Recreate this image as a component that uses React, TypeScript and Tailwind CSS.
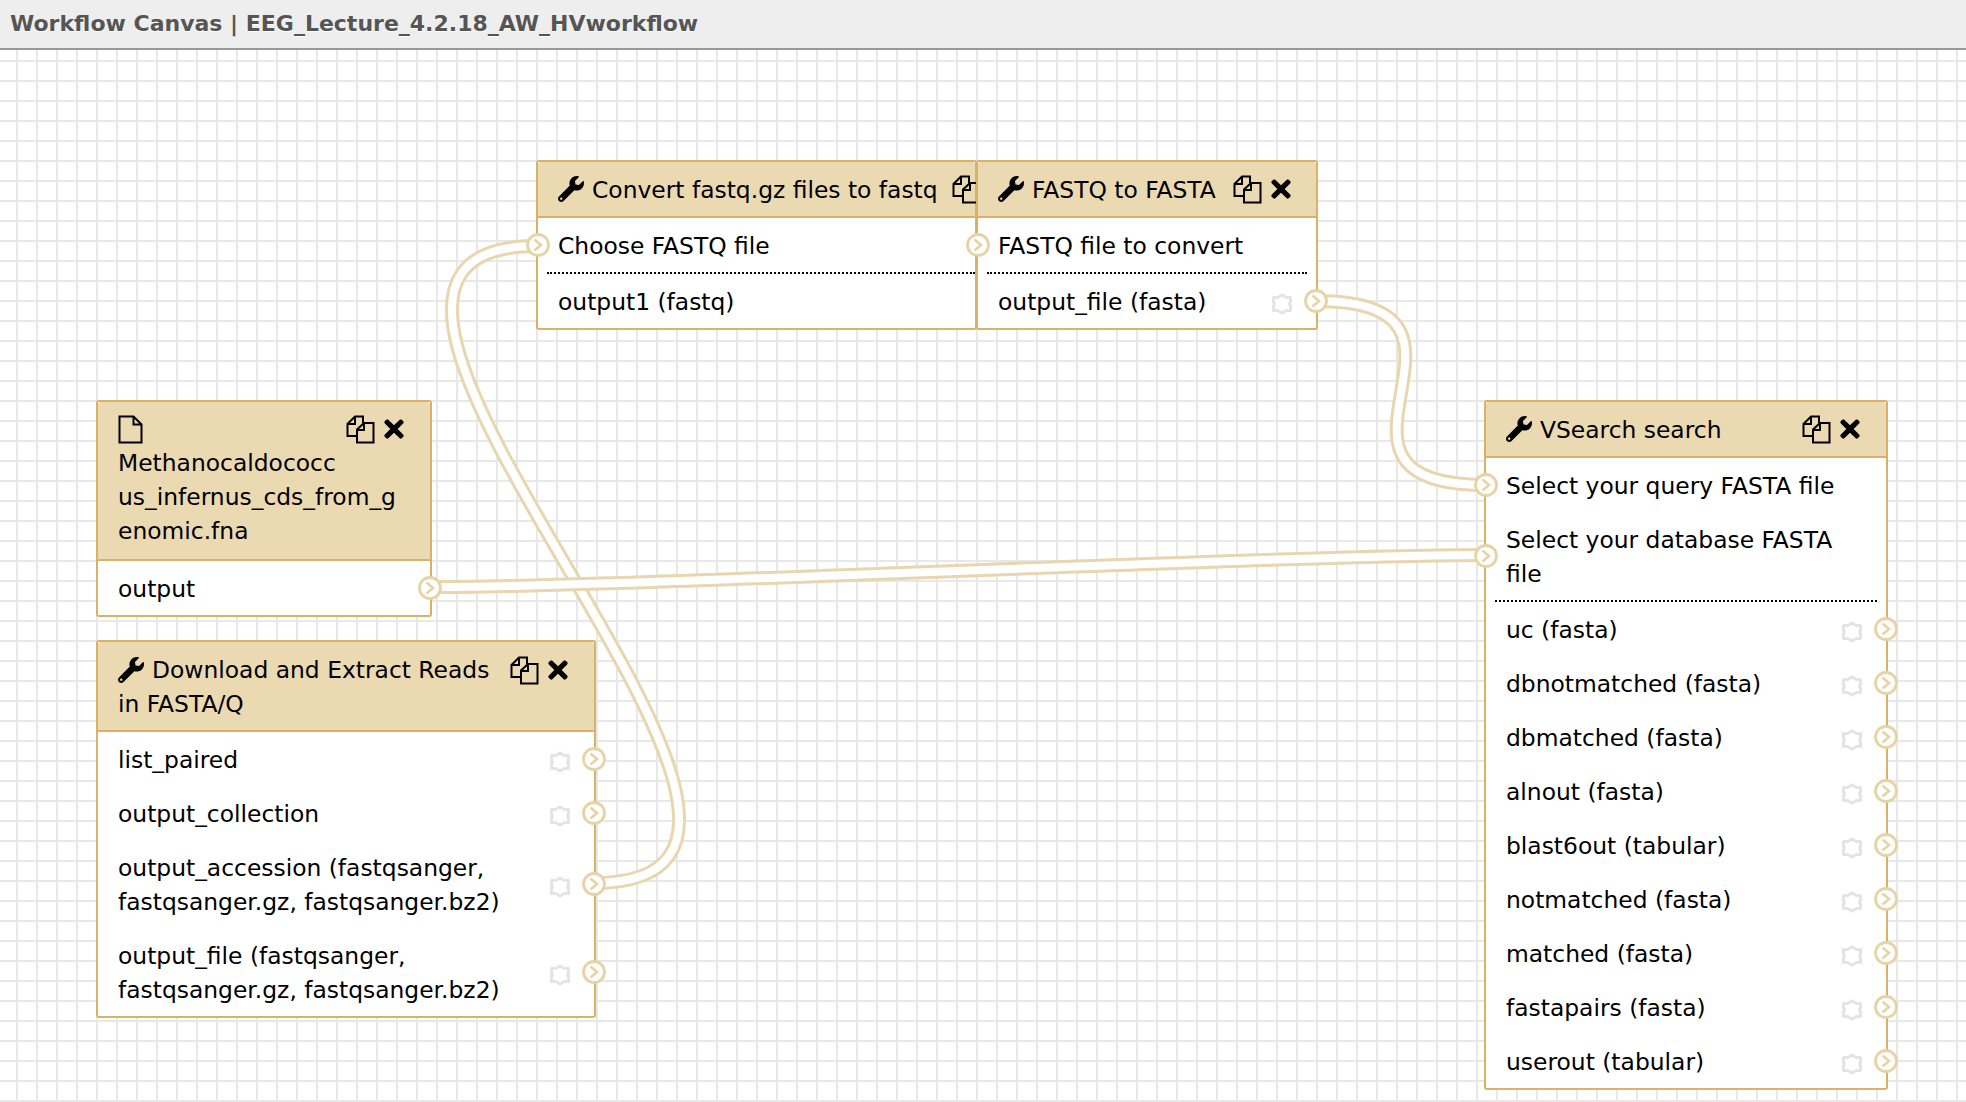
import React from 'react';
import { FaTimes, FaWrench } from 'react-icons/fa';

const Terminal = ({ side }: { side: 'left' | 'right' }) => (
  <svg
    width="26"
    height="26"
    viewBox="0 0 26 26"
    className={`absolute top-1/2 z-20 -translate-y-1/2 ${side === 'left' ? '-left-[13px]' : '-right-[13px]'}`}
  >
    <circle cx="13" cy="13" r="10.5" fill="#ffffff" stroke="#e6d3a6" strokeWidth="2.8" />
    <path d="M9.5 7.5 L16 13 L9.5 18.5" fill="none" stroke="#e6d3a6" strokeWidth="2.6" />
  </svg>
);

const OutputStar = () => (
  <svg
    width="22"
    height="22"
    viewBox="0 0 22 22"
    className="absolute right-[23px] top-1/2 -translate-y-[8px] blur-[0.4px]"
  >
    <path
      d="M11 2 L15.5 4.5 H19.5 V9 L18.5 11 L19.5 13 V17.5 H15.5 L11 20 L6.5 17.5 H2.5 V13 L3.5 11 L2.5 9 V4.5 H6.5 Z"
      fill="none"
      stroke="#e4e4e4"
      strokeWidth="3"
      strokeLinejoin="round"
    />
  </svg>
);

const CopyIcon = () => (
  <svg width="29" height="29" viewBox="0 0 29 29" className="shrink-0" fill="none" stroke="#000" strokeWidth="2">
    <path d="M10 21 H1.5 V9 L9 1.5 H17 V8" />
    <path d="M9 2 V9 H2" />
    <path d="M11 27.5 V14.5 L18 8 H27.5 V27.5 Z" />
    <path d="M18 8.5 V15 H11.5" />
  </svg>
);

const FileIcon = () => (
  <svg width="25" height="29" viewBox="0 0 25 29" className="shrink-0" fill="none" stroke="#000" strokeWidth="2">
    <path d="M1.5 1.5 H15.5 L23.5 9.5 V27.5 H1.5 Z" />
    <path d="M15.5 2 V9.5 H23" />
  </svg>
);

const Actions = () => (
  <span className="flex shrink-0 items-center gap-[9px]">
    <CopyIcon />
    <FaTimes size={28} color="#000" className="-mx-[4px]" />
  </span>
);

const Row = ({
  lines,
  inTerm,
  outTerm,
  star,
}: {
  lines: string[];
  inTerm?: boolean;
  outTerm?: boolean;
  star?: boolean;
}) => (
  <div className="relative px-[20px] pb-[9px] pt-[11px]">
    {inTerm && <Terminal side="left" />}
    {star && <OutputStar />}
    {outTerm && <Terminal side="right" />}
    {lines.map((l) => (
      <div key={l} className="whitespace-nowrap">
        {l}
      </div>
    ))}
  </div>
);

const Dots = () => <div className="mx-[9px] border-t-2 border-dotted border-black" />;

const titleCls =
  'flex h-[56px] items-center border-b-2 border-[#d8b365] bg-[#ebd9b2] pl-[20px] rounded-t-[3px]';

const downloadOutputs: string[][] = [
  ['list_paired'],
  ['output_collection'],
  ['output_accession (fastqsanger,', 'fastqsanger.gz, fastqsanger.bz2)'],
  ['output_file (fastqsanger,', 'fastqsanger.gz, fastqsanger.bz2)'],
];

const vsearchOutputs = [
  'uc (fasta)',
  'dbnotmatched (fasta)',
  'dbmatched (fasta)',
  'alnout (fasta)',
  'blast6out (tabular)',
  'notmatched (fasta)',
  'matched (fasta)',
  'fastapairs (fasta)',
  'userout (tabular)',
];

// bezier ends are in canvas coordinates, header is 50px
const connectors = [
  'M594 833 C910 833 221 196 537 196',
  'M1317 251 C1517 251 1285 435 1485 435',
  'M430 537 C630 537 1285 505 1485 505',
];

export default function App() {
  return (
    <div className="flex h-screen flex-col overflow-hidden bg-white font-['DejaVu_Sans',sans-serif] text-[23.4px] leading-[34px] text-black">
      <div className="flex h-[50px] shrink-0 items-center border-b-2 border-[#999999] bg-[#eeeeee] pl-[10px] text-[22px] font-bold text-[#555555] [text-shadow:0_1px_1px_#ffffff]">
        Workflow Canvas | EEG_Lecture_4.2.18_AW_HVworkflow
      </div>

      <div className="relative flex-1 bg-[linear-gradient(#e8e8e8_2px,transparent_2px),linear-gradient(90deg,#e8e8e8_2px,transparent_2px)] bg-[size:20px_20px] bg-[position:16px_10px]">
        <svg width="1966" height="1052" className="absolute left-0 top-0" fill="none">
          {connectors.map((d) => (
            <g key={d}>
              <path d={d} stroke="#e8d6ae" strokeWidth="14" />
              <path d={d} stroke="#ffffff" strokeWidth="8" />
            </g>
          ))}
        </svg>

        {/* Convert fastq.gz */}
        <div className="absolute left-[536px] top-[110px] w-[441px] rounded-[3px] border-2 border-[#d8b365] bg-white">
          <div className={titleCls}>
            <FaWrench size={26} className="mr-[8px] shrink-0" />
            <span className="whitespace-nowrap pt-[2px]">Convert fastq.gz files to fastq</span>
            <span className="ml-[14px]">
              <Actions />
            </span>
          </div>
          <Row lines={['Choose FASTQ file']} inTerm />
          <div className="ml-[9px] border-t-2 border-dotted border-black" />
          <Row lines={['output1 (fastq)']} />
        </div>

        {/* FASTQ to FASTA */}
        <div className="absolute left-[976px] top-[110px] z-10 w-[342px] rounded-[3px] border-2 border-[#d8b365] bg-white">
          <div className={titleCls}>
            <FaWrench size={26} className="mr-[8px] shrink-0" />
            <span className="whitespace-nowrap pt-[2px]">FASTQ to FASTA</span>
            <span className="ml-auto pr-[25px]">
              <Actions />
            </span>
          </div>
          <Row lines={['FASTQ file to convert']} inTerm />
          <Dots />
          <Row lines={['output_file (fasta)']} star outTerm />
        </div>

        {/* Input dataset */}
        <div className="absolute left-[96px] top-[350px] w-[336px] rounded-[3px] border-2 border-[#d8b365] bg-white">
          <div className="rounded-t-[3px] border-b-2 border-[#d8b365] bg-[#ebd9b2] pb-[11px] pl-[20px] pr-[26px] pt-[10px]">
            <div className="flex h-[34px] items-center justify-between">
              <FileIcon />
              <Actions />
            </div>
            <div>Methanocaldococc</div>
            <div>us_infernus_cds_from_g</div>
            <div>enomic.fna</div>
          </div>
          <Row lines={['output']} outTerm />
        </div>

        {/* Download and Extract Reads */}
        <div className="absolute left-[96px] top-[590px] w-[500px] rounded-[3px] border-2 border-[#d8b365] bg-white">
          <div className="rounded-t-[3px] border-b-2 border-[#d8b365] bg-[#ebd9b2] pb-[9px] pl-[20px] pr-[26px] pt-[11px]">
            <div className="flex h-[34px] items-center">
              <FaWrench size={26} className="mr-[8px] shrink-0" />
              <span className="whitespace-nowrap">Download and Extract Reads</span>
              <span className="ml-auto">
                <Actions />
              </span>
            </div>
            <div>in FASTA/Q</div>
          </div>
          {downloadOutputs.map((lines) => (
            <Row key={lines[0]} lines={lines} star outTerm />
          ))}
        </div>

        {/* VSearch */}
        <div className="absolute left-[1484px] top-[350px] w-[404px] rounded-[3px] border-2 border-[#d8b365] bg-white">
          <div className={titleCls}>
            <FaWrench size={26} className="mr-[8px] shrink-0" />
            <span className="whitespace-nowrap pt-[2px]">VSearch search</span>
            <span className="ml-auto pr-[26px]">
              <Actions />
            </span>
          </div>
          <Row lines={['Select your query FASTA file']} inTerm />
          <Row lines={['Select your database FASTA', 'file']} inTerm />
          <Dots />
          {vsearchOutputs.map((o) => (
            <Row key={o} lines={[o]} star outTerm />
          ))}
        </div>
      </div>
    </div>
  );
}
